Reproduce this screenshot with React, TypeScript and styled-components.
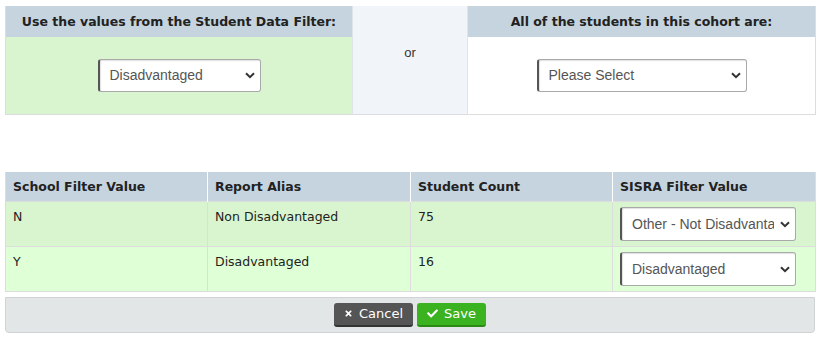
import styled, { createGlobalStyle } from 'styled-components'
import { FaCheck, FaTimes } from 'react-icons/fa'

const GlobalStyle = createGlobalStyle`
  body {
    margin: 0;
    background: #fff;
    font-family: 'DejaVu Sans', Verdana, sans-serif;
    font-size: 12.5px;
    color: #222;
  }
`

const rows = [
  { code: 'N', alias: 'Non Disadvantaged', count: 75, value: 'Other - Not Disadvantaged' },
  { code: 'Y', alias: 'Disadvantaged', count: 16, value: 'Disadvantaged' },
]

const Chevron = () => (
  <svg width="10" height="7" viewBox="0 0 10 7">
    <path d="M1 1.2 L5 5.2 L9 1.2" fill="none" stroke="#333" strokeWidth="2" />
  </svg>
)

interface DropdownProps {
  width: number
  height: number
  value: string
  options: string[]
}

const Dropdown = ({ width, height, value, options }: DropdownProps) => (
  <SelectWrap style={{ width, height }}>
    <Select defaultValue={value}>
      {options.map(o => (
        <option key={o}>{o}</option>
      ))}
    </Select>
    <Arrow>
      <Chevron />
    </Arrow>
  </SelectWrap>
)

export default function App() {
  return (
    <>
      <GlobalStyle />
      <Page>
        <ChoiceTable>
          <colgroup>
            <col style={{ width: 347 }} />
            <col style={{ width: 115 }} />
            <col style={{ width: 348 }} />
          </colgroup>
          <tbody>
            <tr>
              <ChoiceHead>Use the values from the Student Data Filter:</ChoiceHead>
              <OrCell rowSpan={2}>or</OrCell>
              <ChoiceHead>All of the students in this cohort are:</ChoiceHead>
            </tr>
            <tr>
              <ChoiceCell $tone="green">
                <Dropdown
                  width={163}
                  height={33}
                  value="Disadvantaged"
                  options={['Disadvantaged', 'Other - Not Disadvantaged']}
                />
              </ChoiceCell>
              <ChoiceCell $tone="white">
                <Dropdown
                  width={210}
                  height={33}
                  value="Please Select"
                  options={['Please Select', 'Disadvantaged', 'Other - Not Disadvantaged']}
                />
              </ChoiceCell>
            </tr>
          </tbody>
        </ChoiceTable>

        <MapTable>
          <colgroup>
            <col style={{ width: 202 }} />
            <col style={{ width: 203 }} />
            <col style={{ width: 202 }} />
            <col style={{ width: 203 }} />
          </colgroup>
          <thead>
            <tr>
              <MapHead>School Filter Value</MapHead>
              <MapHead>Report Alias</MapHead>
              <MapHead>Student Count</MapHead>
              <MapHead>SISRA Filter Value</MapHead>
            </tr>
          </thead>
          <tbody>
            {rows.map((r, i) => (
              <MapRow key={r.code} $alt={i % 2 === 1}>
                <MapCell>{r.code}</MapCell>
                <MapCell>{r.alias}</MapCell>
                <MapCell>{r.count}</MapCell>
                <SelectCell>
                  <Dropdown
                    width={176}
                    height={34}
                    value={r.value}
                    options={['Other - Not Disadvantaged', 'Disadvantaged']}
                  />
                </SelectCell>
              </MapRow>
            ))}
          </tbody>
        </MapTable>

        <Footer>
          <Button $kind="cancel">
            <FaTimes size={9} /> Cancel
          </Button>
          <Button $kind="save">
            <FaCheck size={11} /> Save
          </Button>
        </Footer>
      </Page>
    </>
  )
}

const Page = styled.div`
  width: 810px;
  padding: 6px 5px;
`

const ChoiceTable = styled.table`
  width: 810px;
  border-collapse: collapse;
  table-layout: fixed;
  border: 1px solid #ddd;
  border-top: none;
`

const ChoiceHead = styled.th`
  background: #c5d4df;
  height: 31px;
  padding: 0;
  font-weight: bold;
  font-size: 12.5px;
  color: #222;
  text-align: center;
  vertical-align: middle;
`

const OrCell = styled.td`
  background: #f1f4f8;
  border-left: 1px solid #dde4ea;
  border-right: 1px solid #dde4ea;
  vertical-align: top;
  text-align: center;
  padding-top: 39px;
  font-family: 'Liberation Sans', Arial, sans-serif;
  font-size: 13px;
  color: #333;
`

const ChoiceCell = styled.td<{ $tone: 'green' | 'white' }>`
  background: ${p => (p.$tone === 'green' ? '#d9f5cf' : '#fff')};
  height: 76px;
  padding: 0 0 1px;
  text-align: center;
  vertical-align: middle;
`

const SelectWrap = styled.div`
  position: relative;
  display: inline-block;
  vertical-align: middle;
`

const Select = styled.select`
  appearance: none;
  width: 100%;
  height: 100%;
  box-sizing: border-box;
  background: #fff;
  border: 1px solid #a9a9a9;
  border-left: 2px solid #555;
  border-radius: 3px;
  box-shadow: inset 1px 1px 1px rgba(0, 0, 0, 0.12);
  padding: 0 21px 0 10px;
  font-family: 'Liberation Sans', Arial, sans-serif;
  font-size: 14px;
  color: #555;
  text-align: left;
  outline: none;
`

const Arrow = styled.span`
  position: absolute;
  right: 6px;
  top: 50%;
  margin-top: -3px;
  padding-left: 3px;
  background: #fff;
  line-height: 0;
  pointer-events: none;
`

const MapTable = styled.table`
  width: 810px;
  margin-top: 57px;
  border-collapse: collapse;
  table-layout: fixed;
  border: 1px solid #ddd;
  border-top: none;
`

const MapHead = styled.th`
  background: #c5d4df;
  height: 29px;
  padding: 0 7px;
  text-align: left;
  font-size: 12.5px;
  font-weight: bold;
  color: #222;
  border-right: 1px solid #fff;

  &:last-child {
    border-right: none;
  }
`

const MapRow = styled.tr<{ $alt: boolean }>`
  background: ${p => (p.$alt ? '#dfffd6' : '#d9f5cf')};
  border-top: 1px solid #ddd;
`

const MapCell = styled.td`
  height: 38px;
  padding: 6px 7px 0;
  vertical-align: top;
  font-size: 12.5px;
  color: #222;
  border-right: 1px solid #ddd;
  line-height: 17px;
`

const SelectCell = styled.td`
  padding: 0 0 0 7px;
  vertical-align: middle;
`

const Footer = styled.div`
  margin-top: 5px;
  height: 36px;
  background: #e3e6e7;
  border: 1px solid #cfd3d5;
  border-radius: 0 0 4px 4px;
  display: flex;
  align-items: center;
  justify-content: center;
  gap: 4px;
  padding-bottom: 1px;
  box-sizing: border-box;
`

const Button = styled.button<{ $kind: 'cancel' | 'save' }>`
  display: inline-flex;
  align-items: center;
  gap: 6px;
  height: 24px;
  padding: 0 10px;
  border: none;
  border-bottom: 2px solid ${p => (p.$kind === 'save' ? '#2b8a16' : '#333')};
  border-radius: 3px;
  background: ${p => (p.$kind === 'save' ? '#3bb21f' : '#555')};
  color: #fff;
  font-family: 'DejaVu Sans', Verdana, sans-serif;
  font-size: 13px;
  cursor: pointer;
`
